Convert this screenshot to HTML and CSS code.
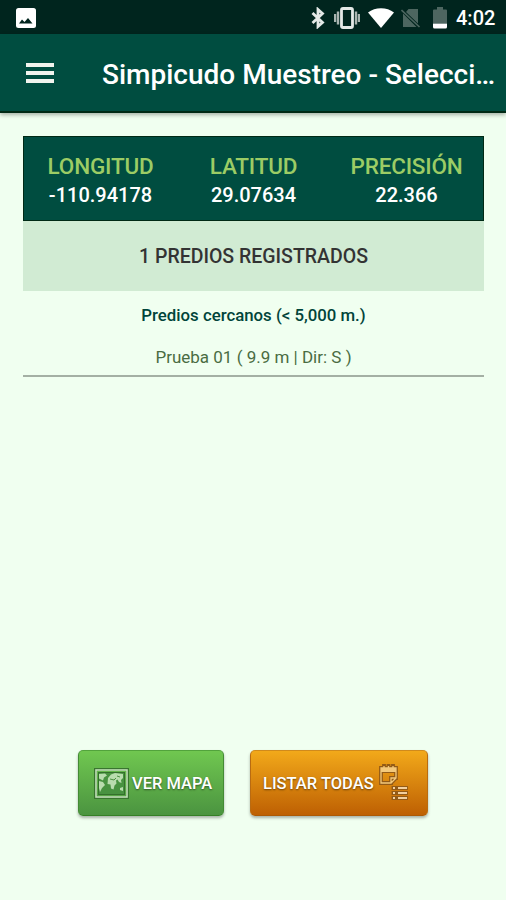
FILE: index.html
```html
<!DOCTYPE html>
<html lang="es">
	<head>
		<meta charset="UTF-8" />
		<meta name="viewport" content="width=device-width, initial-scale=1.0" />
		<title>Simpicudo Muestreo</title>
		<link rel="stylesheet" href="styles.css">
	</head>
	<body>
		<div class="status-bar">
			<svg class="icon-image" width="20" height="20" viewBox="0 0 20 20">
				<rect width="20" height="20" rx="2.5" fill="#fff" />
				<path d="M3 15.500l3-4 2.500 2.500 3.500-4 4.500 5.500z" fill="#00251e" />
			</svg>
			<div class="status-icons">
				<svg class="icon-bluetooth" width="14" height="22" viewBox="0 0 14 22">
					<path d="M1.500 6l10 9.500L7 19.500V2.500l4.500 4L1.500 16" fill="none" stroke="#e4e9e7" stroke-width="2.800" />
				</svg>
				<svg class="icon-vibrate" width="26" height="22" viewBox="0 0 26 22">
					<path d="M1 7v8M4 4.500v13M22 4.500v13M25 7v8" stroke="#aab5b1" stroke-width="2.400" />
					<rect x="7.500" y="1.500" width="11" height="19" rx="1.500" fill="none" stroke="#e4e9e7" stroke-width="2.800" />
				</svg>
				<svg class="icon-wifi" width="26" height="20" viewBox="0 0 26 20">
					<path d="M0 4.500C7-1.200 19-1.200 26 4.500L13 20z" fill="#fff" />
				</svg>
				<svg class="icon-sim" width="20" height="20" viewBox="0 0 20 20">
					<path d="M7.500 1H17v14.500L5 4z M2 5.500L15.500 19H2z" fill="#4d6660" />
					<path d="M.5 2l18 17" stroke="#4d6660" stroke-width="1.600" />
				</svg>
				<svg class="icon-battery" width="14" height="22" viewBox="0 0 14 22">
					<path d="M4 0h6v2.500h3q1 0 1 1V16H0V3.500q0-1 1-1h3z" fill="#4d6660" />
					<path d="M0 16.500h14v3.500q0 1.500-1.500 1.500h-11Q0 21.500 0 20z" fill="#fff" />
				</svg>
				<span class="clock">4:02</span>
			</div>
		</div>

		<div class="app-bar">
			<div class="menu">
				<span></span>
				<span></span>
				<span></span>
			</div>
			<h1>Simpicudo Muestreo - Selecci…</h1>
		</div>

		<div class="content">
			<div class="coords">
				<div class="coord">
					<div class="coord-label">LONGITUD</div>
					<div class="coord-value">-110.94178</div>
				</div>
				<div class="coord">
					<div class="coord-label">LATITUD</div>
					<div class="coord-value">29.07634</div>
				</div>
				<div class="coord">
					<div class="coord-label">PRECISIÓN</div>
					<div class="coord-value">22.366</div>
				</div>
			</div>
			<div class="total"><span>1 PREDIOS REGISTRADOS</span></div>
			<div class="nearby-title"><span>Predios cercanos (&lt; 5,000 m.)</span></div>
			<div class="nearby-item"><span>Prueba 01 ( 9.9 m | Dir: S )</span></div>
		</div>

		<div class="actions">
			<button class="btn btn-map">
				<svg width="35" height="31" viewBox="0 0 35 31">
					<rect x="1.500" y="1.500" width="32" height="28" fill="none" stroke="#3a7430" stroke-width="3" />
					<rect x="2" y="2" width="31" height="27" fill="none" stroke="#c3e2b9" stroke-width="1.600" />
					<rect x="4.500" y="4.500" width="26" height="22" fill="#489240" stroke="#34702c" stroke-width="1" />
					<path d="M5 6l6-.5 2 2-3 2-1 3-4-2z M5 13l4 1 2 3-3 3-2 4-1-4z M14 10l3-3.500 4-1.500 8 1v4l-2 2 .5 3-2.500-1-1.500-2.500-1.500 1 .5 3-2 2-1 4-2.500-1-.5-4-3-.5z M26 20l3-1v4l-3-1z" fill="#b9dcae" />
					<path d="M16 11l4 1 2-2M23 8l3 1" stroke="#4b8f41" fill="none" />
				</svg>
				<span>VER MAPA</span>
			</button>
			<button class="btn btn-list">
				<span>LISTAR TODAS</span>
				<svg width="30" height="38" viewBox="0 0 30 38">
					<g class="list-outline">
						<path d="M2 4h15v10l-5 5H2z M2 7h15M12 19v-5h5M5 2v3M9.500 2v3M14 2v3" />
						<path d="M14.500 24h1.500M19 24h8M14.500 29h1.500M19 29h8M14.500 34h1.500M19 34h8" />
					</g>
					<path d="M2 4h15v4H2z" fill="#f3c97c" />
					<path class="list-line" d="M2 4h15v10l-5 5H2z M12 19v-5h5M5 2v3M9.500 2v3M14 2v3" />
					<path class="list-rows" d="M14 24h2M19 24h9M14 29h2M19 29h9M14 34h2M19 34h9" />
				</svg>
			</button>
		</div>
	</body>
</html>
```

FILE: styles.css
```css
* {
	box-sizing: border-box;
}
body {
	margin: 0;
	height: 900px;
	display: flex;
	flex-direction: column;
	font-family: Roboto, "Liberation Sans", sans-serif;
	background-color: #f0fff0;
	overflow: hidden;
}
svg {
	display: block;
	flex: none;
}
.status-bar {
	height: 34px;
	flex: none;
	display: flex;
	justify-content: space-between;
	align-items: center;
	padding: 1px 11px 0 16px;
	background-color: #00251e;
}
.status-icons {
	display: flex;
	align-items: center;
}
.icon-vibrate {
	margin-left: 9px;
}
.icon-wifi {
	margin-left: 8px;
}
.icon-sim {
	margin-left: 7px;
}
.icon-battery {
	margin-left: 12px;
}
.clock {
	width: 39px;
	margin-left: 9px;
	color: #fff;
	font-size: 20px;
	font-weight: 500;
	line-height: 22px;
	white-space: nowrap;
}
.app-bar {
	height: 79px;
	flex: none;
	display: flex;
	align-items: center;
	padding-left: 26px;
	background-color: #004d40;
	border-bottom: 2px solid #002a15;
	box-shadow: 0 2px 4px rgba(0, 0, 0, 0.3);
}
.menu {
	width: 28px;
	display: flex;
	flex-direction: column;
	gap: 4px;
}
.menu span {
	height: 4px;
	background-color: #f1f4ee;
}
h1 {
	margin: 5px 0 0 48px;
	color: #fff;
	font-size: 28px;
	font-weight: 500;
	line-height: 34px;
	white-space: nowrap;
}
.content {
	padding: 23px 22px 0 23px;
	text-align: center;
}
.coords {
	height: 85px;
	display: grid;
	grid-template-columns: repeat(3, 1fr);
	padding-top: 14px;
	background-color: #004d40;
	border: 1px solid #002a15;
}
.coord-label {
	color: #9ccc65;
	font-size: 22.5px;
	font-weight: 500;
	letter-spacing: -0.2px;
	line-height: 30px;
}
.coord-value {
	color: #fff;
	font-size: 20px;
	font-weight: 500;
	line-height: 28px;
}
.total {
	height: 70px;
	background-color: #d1ebd3;
	color: #333;
	font-size: 19.5px;
	font-weight: 500;
	line-height: 71px;
}
.nearby-title {
	height: 46px;
	color: #00443a;
	font-size: 16.8px;
	font-weight: 500;
	line-height: 48px;
}
.nearby-item {
	height: 40px;
	color: #4a6c42;
	font-size: 17px;
	line-height: 40px;
	border-bottom: 2px solid #a4b0a4;
}
.actions {
	display: flex;
	justify-content: center;
	gap: 26px;
	margin-top: auto;
	padding-bottom: 84px;
}
.btn {
	height: 66px;
	display: flex;
	align-items: center;
	padding: 0;
	border: 1px solid;
	border-radius: 5px;
	color: #fff;
	font-family: inherit;
	font-size: 16.5px;
	font-weight: 500;
	white-space: nowrap;
	text-shadow: 0 1px 2px rgba(0, 0, 0, 0.5);
	box-shadow: 0 2px 3px rgba(0, 0, 0, 0.3);
}
.btn-map {
	width: 146px;
	padding-left: 15px;
	gap: 3px;
	background: linear-gradient(#70c750, #4b9440);
	border-color: #52a33c #448b35 #358026;
}
.btn-list {
	width: 178px;
	padding-left: 12px;
	gap: 5px;
	background: linear-gradient(#f2a91a, #be6003);
	border-color: #d08a1c #b96b11 #ad5a04;
}
.list-outline {
	fill: none;
	stroke: #925a17;
	stroke-width: 3.8;
	stroke-linecap: square;
}
.list-line {
	fill: none;
	stroke: #f3c97c;
	stroke-width: 1.3;
}
.list-rows {
	stroke: #f2cf9e;
	stroke-width: 2;
}
```
